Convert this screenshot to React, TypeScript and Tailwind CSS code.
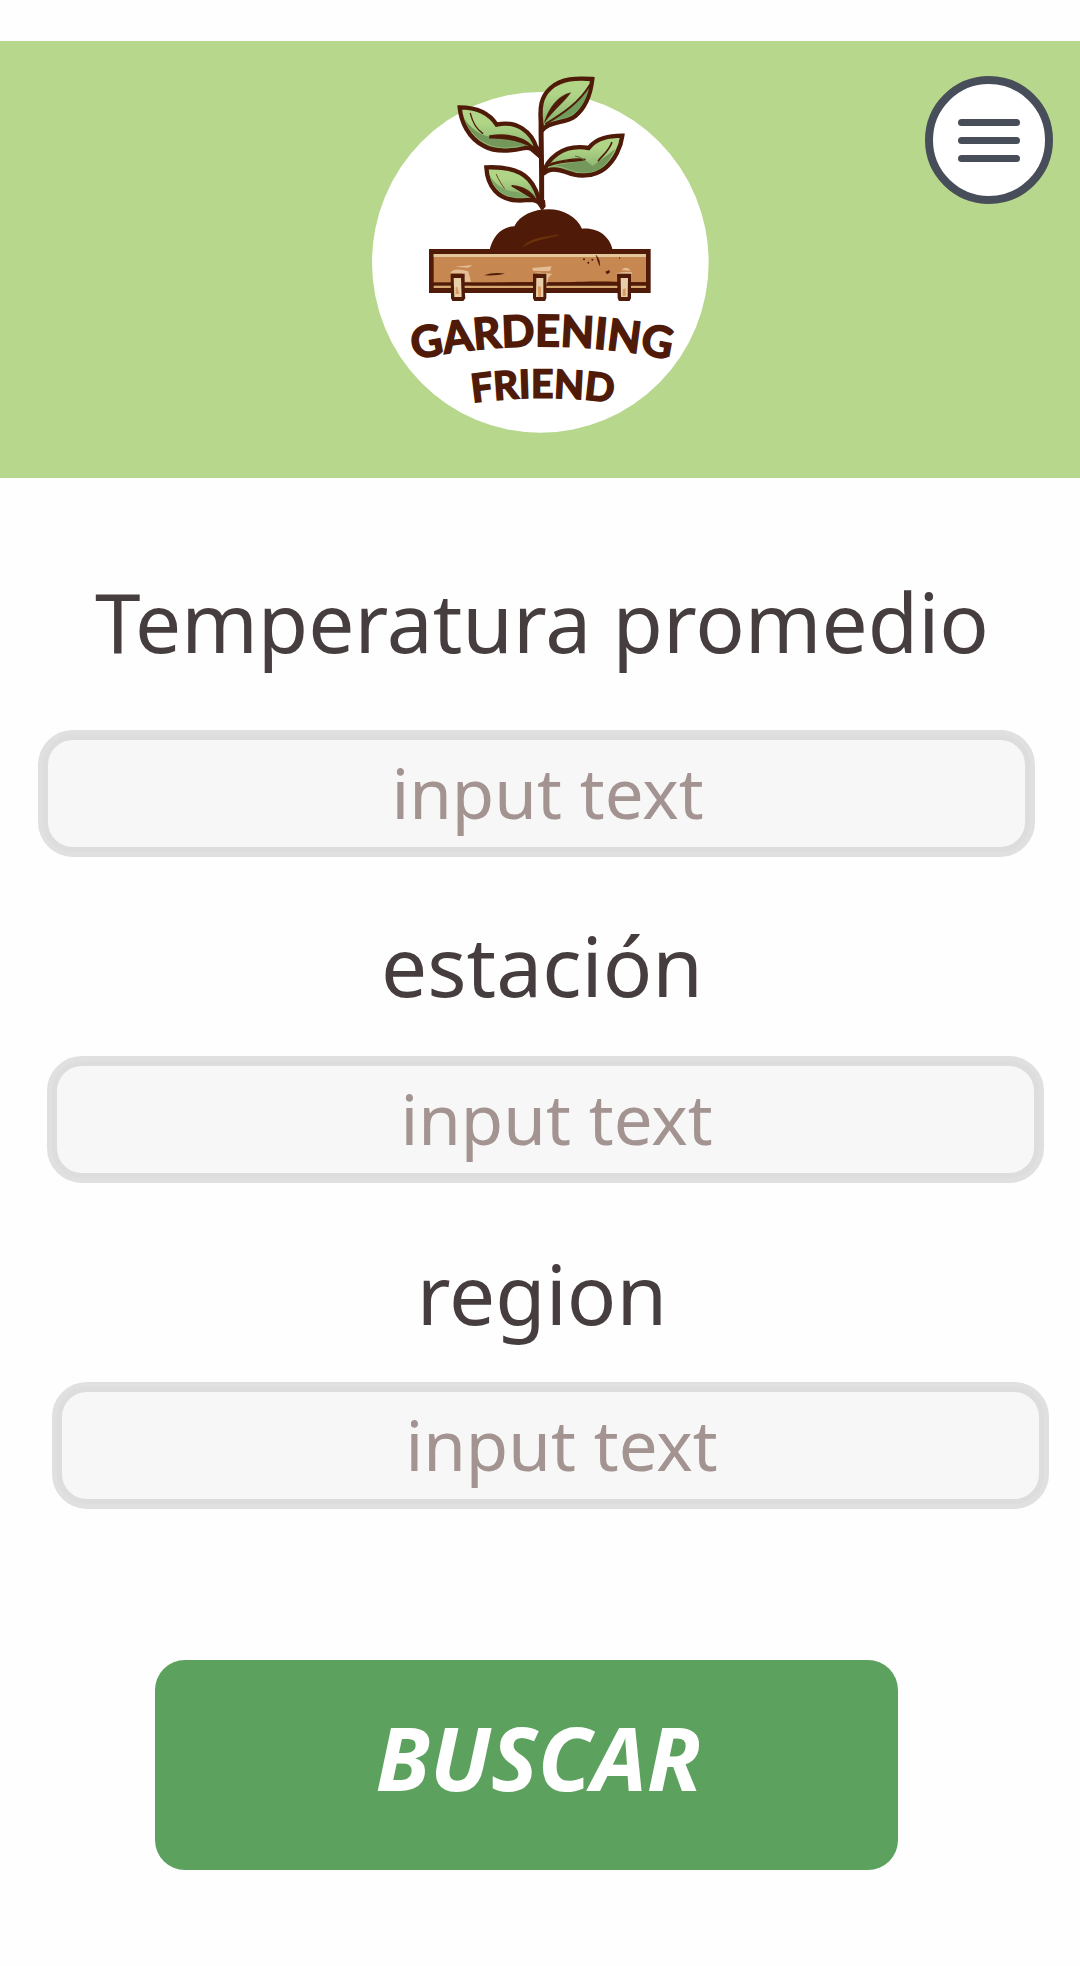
import React from "react";

const OUTLINE = "#4f1b08";

function Logo() {
  return (
    <svg viewBox="0 0 1080 1140" className="h-[380px] w-[360px]" role="img" aria-label="Gardening Friend">
      <defs>
        <linearGradient id="leaf" x1="0" y1="0" x2="0" y2="1">
          <stop offset="0.3" stopColor="#b0d587" />
          <stop offset="1" stopColor="#7fa968" />
        </linearGradient>
        <path id="arc-top" d="M121 908 A1860 1860 0 0 1 971 908" />
        <path id="arc-bottom" d="M300 1034 A1500 1500 0 0 1 796 1034" />
      </defs>
      <ellipse cx="541" cy="607" rx="505" ry="511" fill="#fff" />

      {/* stem */}
      <path d="M545 150 C540 190 546 240 545 440" fill="none" stroke={OUTLINE} strokeWidth="15" />
      <path d="M528 425 L545 452 L557 440 L555 420 Z" fill={OUTLINE} />

      {/* upper right leaf */}
      <g stroke={OUTLINE} strokeLinejoin="miter">
        <path d="M547 210 C534 140 545 108 572 84 C605 54 650 54 697 57 C692 100 680 140 646 168 C615 192 570 182 547 210 Z" fill="url(#leaf)" strokeWidth="13" />
        <path d="M565 186 C610 160 665 125 688 80 C678 130 652 160 620 172 Z" fill="#6f9d5e" strokeWidth="0" />
        <path d="M556 192 C610 160 660 125 690 74" fill="none" strokeWidth="6" />
        <path d="M553 188 C565 145 595 105 632 98 C620 118 585 145 553 188 Z" fill={OUTLINE} strokeWidth="1" />
      </g>

      {/* upper left leaf */}
      <g stroke={OUTLINE} strokeLinejoin="miter">
        <path d="M545 295 C535 275 520 262 495 264 C460 272 410 280 372 258 C325 235 303 185 299 142 C340 142 385 155 410 194 C470 180 515 215 530 265 Z" fill="url(#leaf)" strokeWidth="13" />
        <path d="M310 170 C330 205 360 225 395 232 C440 228 475 238 502 256 C465 258 420 272 378 250 C338 230 320 200 310 170 Z" fill="#74985c" strokeWidth="0" />
        <path d="M390 228 C445 220 490 232 520 262 C480 240 440 232 390 233 Z" fill={OUTLINE} strokeWidth="5" />
        <path d="M331 160 C338 188 350 208 368 220" fill="none" strokeWidth="4" strokeLinecap="round" />
        <path d="M500 260 L535 262 L547 300 Z" fill={OUTLINE} strokeWidth="5" />
      </g>

      {/* middle right leaf */}
      <g stroke={OUTLINE} strokeLinejoin="miter">
        <path d="M549 342 C560 300 605 250 686 264 C710 232 750 228 787 227 C783 260 765 300 735 325 C700 353 650 350 620 337 C590 325 565 325 549 342 Z" fill="url(#leaf)" strokeWidth="13" />
        <path d="M585 316 C620 310 650 308 672 298 L698 318 C720 300 745 285 766 266 C752 295 736 318 712 330 C670 346 634 331 610 322 Z" fill="#74985c" strokeWidth="0" />
        <path d="M565 318 C600 302 640 308 676 298 C650 294 610 300 575 310 Z" fill={OUTLINE} strokeWidth="4" />
        <path d="M755 248 C748 270 732 282 715 302" fill="none" strokeWidth="5" strokeLinecap="round" />
        <path d="M645 288 Q660 290 672 300" fill="none" stroke="#526b35" strokeWidth="3" />
      </g>

      {/* lower left leaf */}
      <g stroke={OUTLINE} strokeLinejoin="miter">
        <path d="M540 430 C520 412 500 424 470 421 C415 418 382 380 379 322 C425 320 475 325 505 357 C525 378 532 400 540 430 Z" fill="url(#leaf)" strokeWidth="13" />
        <path d="M389 345 C405 375 435 395 470 395 L512 410 C450 420 403 402 389 345 Z" fill="#7ba465" strokeWidth="0" />
        <path d="M455 377 C490 380 515 395 528 420 C505 408 480 392 455 377 Z" fill={OUTLINE} strokeWidth="4" />
        <path d="M409 343 C416 360 424 372 433 385" fill="none" stroke="#7a4420" strokeWidth="3" strokeLinecap="round" />
      </g>

      {/* soil */}
      <path d="M388 575 C396 530 425 500 463 499 C480 465 520 448 565 448 C610 448 650 470 666 506 C715 502 752 530 759 575 Z" fill={OUTLINE} />
      <path d="M489 560 C510 535 550 532 595 525 C560 535 520 540 489 560 Z" fill="#6d3508" stroke="#6d3508" strokeWidth="2" />

      {/* planter box */}
      <rect x="207" y="567" width="665" height="132" fill={OUTLINE} />
      <rect x="221" y="582" width="637" height="85" fill="#c68750" />
      <rect x="221" y="582" width="637" height="9" fill="#e4c69b" />
      <rect x="221" y="677" width="637" height="7" fill="#d6a970" />
      <path d="M333 673 C450 662 560 670 640 666 C700 662 790 666 858 667 V676 H333 Z" fill={OUTLINE} />
      <path d="M372 646 Q400 636 435 641 Q410 648 372 646 Z" fill={OUTLINE} />
      <path d="M284 620 L338 615 L325 623 Z M270 640 Q280 620 325 634 L333 665 H312 L305 640 Z M516 624 L575 619 L570 633 L520 633 Z M524 637 L577 641 L566 652 L560 676 L555 646 Z M770 640 Q785 635 815 636 V643 H770 Z M784 630 Q800 616 812 632 Z" fill="#e3bd93" />
      <path d="M708 585 Q722 600 719 618 Q713 605 708 585 Z" fill={OUTLINE} stroke={OUTLINE} strokeWidth="1" />
      <g fill={OUTLINE}>
        <circle cx="672" cy="598" r="3" />
        <circle cx="685" cy="608" r="3" />
        <circle cx="697" cy="599" r="3" />
        <circle cx="779" cy="594" r="2" />
        <path d="M736 635 L748 630 L750 637 L741 643 Z" />
      </g>
      {/* clasps */}
      <path d="M272 641 H314 V690 L316 715 L310 723 H277 L273 715 Z M519 641 H559 V715 L555 723 H523 L519 715 Z M771 641 H813 V715 L809 723 H777 L773 715 Z" fill={OUTLINE} />
      <path d="M281 654 H303 L305 711 H283 Z M529 654 H550 V711 H528 Z M782 654 H804 L803 711 H783 Z" fill="#e8cfa9" />
      <path d="M287 682 L292 680 L298 702 H287 Z M534 678 L543 680 V710 H535 Z M788 688 L797 685 V707 H788 Z" fill="#d99a5f" />

      {/* wordmark */}
      <g fill={OUTLINE} stroke={OUTLINE} strokeWidth="5" className="font-['Lato'] font-bold" textAnchor="middle">
        <text fontSize="130">
          <textPath href="#arc-top" startOffset="50%">GARDENING</textPath>
        </text>
        <text fontSize="117">
          <textPath href="#arc-bottom" startOffset="50%">FRIEND</textPath>
        </text>
      </g>
    </svg>
  );
}

function MenuButton() {
  return (
    <button
      type="button"
      aria-label="Menú"
      className="mt-4 mr-[27px] flex size-32 flex-col items-center justify-center gap-[11px] justify-self-end rounded-full border-8 border-[#484e59] bg-white"
    >
      <span className="h-[7px] w-[62px] rounded-full bg-[#484e59]" />
      <span className="h-[7px] w-[62px] rounded-full bg-[#484e59]" />
      <span className="h-[7px] w-[62px] rounded-full bg-[#484e59]" />
    </button>
  );
}

type FieldProps = { id: string; label: string; className: string; boxClassName: string };

function Field({ id, label, className, boxClassName }: FieldProps) {
  return (
    <div className={`flex flex-col ${className}`}>
      <label htmlFor={id} className="self-center pl-1 text-[82px] leading-[100px] text-[#463e3e]">
        {label}
      </label>
      <div className={`rounded-[35px] border-[5px] border-[#e1e0e0] bg-[#dedddd] ${boxClassName}`}>
        <input
          id={id}
          type="text"
          placeholder="input text"
          className="block h-[117px] w-full rounded-[30px] border-[5px] border-[#dedddd] bg-[#f7f7f7] pb-1 pl-[22px] text-center text-[69px] text-[#463e3e] outline-none placeholder:text-[#a39391]"
        />
      </div>
    </div>
  );
}

export default function App() {
  return (
    <div className="min-h-screen bg-[#fefefe] pt-[41px] pb-24 font-['Noto_Sans',sans-serif]">
      <header className="grid grid-cols-[1fr_auto_1fr] items-start bg-[#b7d78c] pt-[19px] pb-[38px]">
        <div className="col-start-2">
          <Logo />
        </div>
        <MenuButton />
      </header>
      <form onSubmit={(e: React.FormEvent) => e.preventDefault()}>
        <Field id="temperatura" label="Temperatura promedio" className="mt-[93px] gap-[59px]" boxClassName="ml-[38px] mr-[45px]" />
        <Field id="estacion" label="estación" className="mt-[58px] gap-[41px]" boxClassName="ml-[47px] mr-9" />
        <Field id="region" label="region" className="mt-[60px] gap-[39px]" boxClassName="ml-[52px] mr-[31px]" />
        <div className="mt-[151px] mr-[182px] ml-[155px]">
          <button
            type="submit"
            className="h-[210px] w-full rounded-[30px] bg-[#5ca15e] pb-4 pl-6 text-[88px] leading-[100px] font-bold text-white italic"
          >
            BUSCAR
          </button>
        </div>
      </form>
    </div>
  );
}
